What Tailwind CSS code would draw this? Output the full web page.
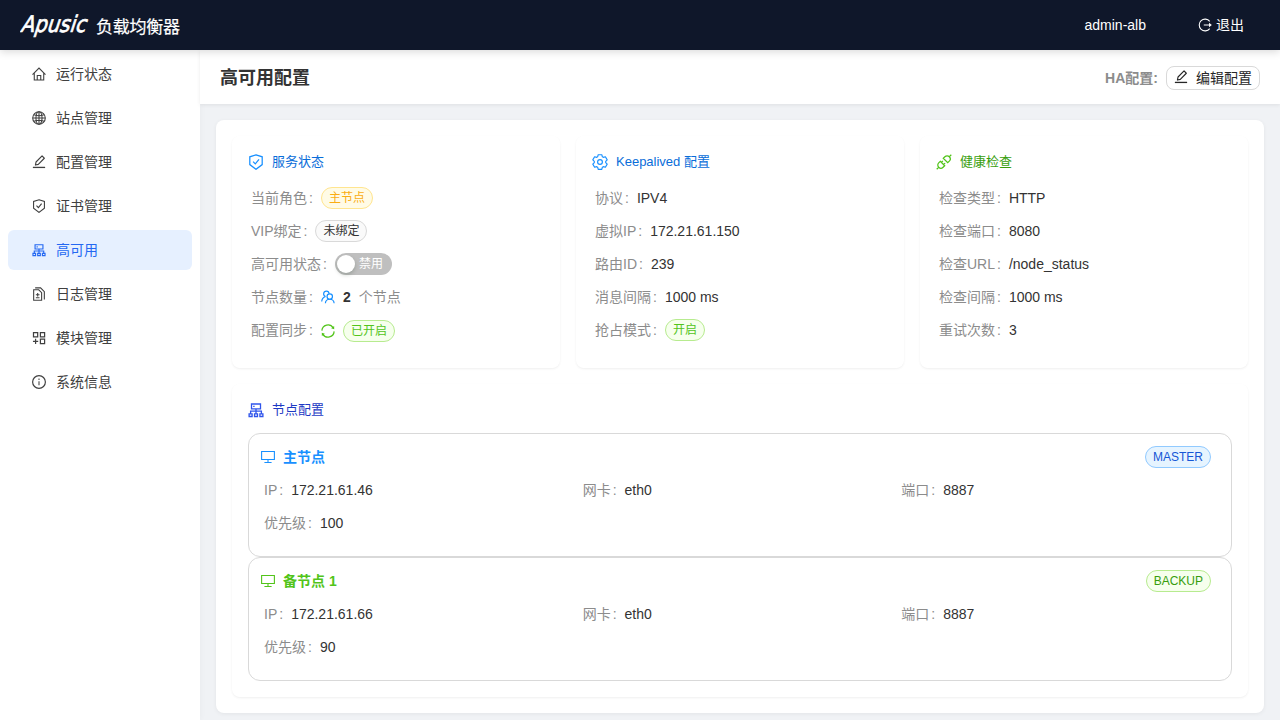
<!DOCTYPE html>
<html lang="zh-CN">
<head>
  <meta charset="UTF-8" />
  <title>高可用配置</title>
  <script src="https://cdn.jsdelivr.net/npm/@tailwindcss/browser@4"></script>
  <style>
    body {
      font-family: 'Liberation Sans', 'Noto Sans CJK SC', sans-serif;
    }
  </style>
</head>
<body class="w-[1280px] h-[720px] overflow-hidden bg-[#f0f2f5] text-sm text-[#404040]">
  <!-- icons -->
  <svg class="hidden">
    <symbol id="home" viewBox="0 0 16 16"><path d="M.6 8.6 8 1.2l7.4 7.4M2.6 7v7.8h10.8V7M6 14.6V9.8h4v4.8" fill="none" stroke="currentColor" stroke-width="1.25"/></symbol>
    <symbol id="globe" viewBox="0 0 16 16"><g fill="none" stroke="currentColor" stroke-width="1.25"><circle cx="8" cy="8" r="7.2"/><ellipse cx="8" cy="8" rx="3.5" ry="7.2"/><path d="M8 1v14M1 8h14M2.4 4.3c3 1.2 8.2 1.2 11.2 0M2.4 11.7c3-1.2 8.2-1.2 11.2 0"/></g></symbol>
    <symbol id="edit" viewBox="0 0 16 16"><path d="M1 14.2h14" stroke="currentColor" stroke-width="1.5"/><path d="M3.9 11.5 4.6 8l6.9-6.9 2.6 2.6-6.9 7z" fill="none" stroke="currentColor" stroke-width="1.3" stroke-linejoin="round"/></symbol>
    <symbol id="shield" viewBox="0 0 16 16"><path d="M8 .8 14.2 2.8v7.8L8 15.3l-6.2-4.7V2.8zM5.1 7.6l2.2 2.3 3.7-4.6" fill="none" stroke="currentColor" stroke-width="1.25"/></symbol>
    <symbol id="cluster" viewBox="0 0 16 16"><g fill="none" stroke="currentColor" stroke-width="1.3"><path d="M3.5 2h9v4.8h-9zM8 6.8v5M2.6 11.6V9.2h10.8v2.4M1.1 11.8h3v2.7h-3zM6.5 11.8h3v2.7h-3zM11.9 11.8h3v2.7h-3z"/><path d="M5.2 4.4h1.4"/></g></symbol>
    <symbol id="logs" viewBox="0 0 16 16"><g fill="none" stroke="currentColor" stroke-width="1.25"><path d="M1.9 3.2h5.8l3.3 3.3v8.7H1.9zM3.6 1h6.2l4.3 4.3v8.9M4.4 12.2h4.2M4.4 8.8h4.2M6.5 6.8v4"/></g></symbol>
    <symbol id="modules" viewBox="0 0 16 16"><path d="M1.7 1.9h4.8v4.7H1.7zM9.6 1.9h4.8v4.7H9.6zM9.6 9.3h4.8v5.1H9.6zM4.1 8.8v6.1M1.1 11.9h6" fill="none" stroke="currentColor" stroke-width="1.4"/></symbol>
    <symbol id="info" viewBox="0 0 16 16"><circle cx="8" cy="8" r="7.3" fill="none" stroke="currentColor" stroke-width="1.35"/><path d="M8 7v4.8M8 4.1v1.5" stroke="currentColor" stroke-width="1.2"/></symbol>
    <symbol id="logout" viewBox="0 0 16 16"><path d="M13.4 3.9a6.7 6.7 0 1 0 0 8.2M6.6 8H14" fill="none" stroke="currentColor" stroke-width="1.25"/><path d="M12.6 5.5 15.8 8l-3.2 2.5z" fill="currentColor"/></symbol>
    <symbol id="gear" viewBox="0 0 16 16"><g fill="none" stroke="currentColor" stroke-width="1.15" stroke-linejoin="round"><path d="M6.2.7h3.6l.5 2 1.1.65 2-.6 1.8 3.1-1.5 1.6v1.1l1.5 1.6-1.8 3.1-2-.6-1.1.65-.5 2H6.2l-.5-2-1.1-.65-2 .6-1.8-3.1 1.5-1.6v-1.1L.8 5.85l1.8-3.1 2 .6 1.1-.65z"/><circle cx="8" cy="8" r="2.4"/></g></symbol>
    <symbol id="api" viewBox="0 0 16 16"><path d="m7.3 4.3 4.4 4.4 1.6-1.6a3.1 3.1 0 0 0-4.4-4.4zM13.1 2.9l2.2-2.2M4.3 7.3l4.4 4.4-1.6 1.6a3.1 3.1 0 0 1-4.4-4.4zM2.9 13.1.7 15.3M5.4 8.4l1.5-1.5M7.6 10.6l1.5-1.5" fill="none" stroke="currentColor" stroke-width="1.25"/></symbol>
    <symbol id="team" viewBox="0 0 16 16"><g fill="none" stroke="currentColor" stroke-width="1.35"><circle cx="10" cy="7.5" r="3.1"/><path d="M5 15.2c.2-2.8 2.1-4.6 5-4.6s4.8 1.8 5 4.6M9.2 4.2A3.1 3.1 0 1 0 5.2 7.4M.8 13.2c.2-3 1.8-5 4.4-5.8"/></g></symbol>
    <symbol id="sync" viewBox="0 0 16 16"><g fill="none" stroke="currentColor" stroke-width="1.4"><path d="M1 7.6A7 7 0 0 1 14 4.4M15 8.4A7 7 0 0 1 2 11.6"/></g><path d="m15 2.2.1 3.7-3.5-1zM1 13.8l-.1-3.7 3.5 1z" fill="currentColor"/></symbol>
    <symbol id="desktop" viewBox="0 0 16 16"><path d="M.7 1.8h14.6v9.1H.7zM8 10.9v3.3M3.9 14.3h8.2" fill="none" stroke="currentColor" stroke-width="1.25"/></symbol>
  </svg>

  <header class="relative z-10 h-[50px] bg-[#0f172a] text-white flex items-center pl-5 pr-9 shadow-[0_2px_8px_rgba(0,0,0,0.15)]">
    <svg class="w-40 h-[50px]" viewBox="0 0 160 50" fill="#fff">
      <text transform="translate(0 32) skewX(-18)" font-family="DejaVu Sans" font-size="23" stroke="#fff" stroke-width=".7" textLength="65" lengthAdjust="spacingAndGlyphs">Apusic</text>
      <text x="76" y="32.5" font-size="17" textLength="84" font-family="Noto Sans CJK SC" stroke="#fff" stroke-width=".2">负载均衡器</text>
    </svg>
    <div class="ml-auto">admin-alb</div>
    <div class="ml-[52px] flex items-center gap-1"><svg class="size-[14px]"><use href="#logout"/></svg>退出</div>
  </header>

  <div class="flex h-[670px]">
    <nav class="w-[200px] bg-white px-2 pt-1 flex flex-col gap-1 shadow-[1px_0_6px_rgba(0,0,0,0.03)]">
      <a class="flex h-10 items-center gap-[10px] rounded-md pl-6"><svg class="size-[14px]"><use href="#home"/></svg>运行状态</a>
      <a class="flex h-10 items-center gap-[10px] rounded-md pl-6"><svg class="size-[14px]"><use href="#globe"/></svg>站点管理</a>
      <a class="flex h-10 items-center gap-[10px] rounded-md pl-6"><svg class="size-[14px]"><use href="#edit"/></svg>配置管理</a>
      <a class="flex h-10 items-center gap-[10px] rounded-md pl-6"><svg class="size-[14px]"><use href="#shield"/></svg>证书管理</a>
      <a class="flex h-10 items-center gap-[10px] rounded-md pl-6 bg-[#e6f0ff] text-[#2468f2]"><svg class="size-[14px]"><use href="#cluster"/></svg>高可用</a>
      <a class="flex h-10 items-center gap-[10px] rounded-md pl-6"><svg class="size-[14px]"><use href="#logs"/></svg>日志管理</a>
      <a class="flex h-10 items-center gap-[10px] rounded-md pl-6"><svg class="size-[14px]"><use href="#modules"/></svg>模块管理</a>
      <a class="flex h-10 items-center gap-[10px] rounded-md pl-6"><svg class="size-[14px]"><use href="#info"/></svg>系统信息</a>
    </nav>

    <main class="flex-1">
      <div class="h-[54px] bg-white flex items-center justify-between px-5 shadow-[0_1px_4px_rgba(0,0,0,0.08)]">
        <h1 class="mt-0.5 text-lg leading-[26px] font-bold text-[#333]">高可用配置</h1>
        <div class="mt-0.5 flex items-center gap-2">
          <span class="font-bold text-[#8c8c8c]">HA配置:</span>
          <button class="flex h-6 w-[94px] items-center gap-2 rounded-lg border border-[#d9d9d9] bg-white pl-[7px] text-[#262626]"><svg class="size-[14px] mb-0.5"><use href="#edit"/></svg>编辑配置</button>
        </div>
      </div>

      <div class="mx-4 mt-4 h-[593px] rounded-lg bg-white p-4 shadow-[0_1px_4px_rgba(0,0,0,0.06)]">
        <div class="grid grid-cols-3 gap-4">
          <section class="h-[232px] rounded-lg px-4 pt-4 shadow-[0_1px_2px_rgba(0,0,0,0.05),0_1px_4px_rgba(0,0,0,0.02)]">
            <h2 class="flex h-5 items-center gap-2 text-[13px] text-[#096dd9]"><svg class="size-4 text-[#1890ff]"><use href="#shield"/></svg>服务状态</h2>
            <dl class="mt-[9px] pl-[3px] text-[#8c8c8c]">
              <div class="flex h-[33px] items-center"><dt>当前角色</dt><i class="ml-0.5 mr-2 not-italic">:</i><dd class="h-[22px] rounded-full border border-[#ffe58f] bg-[#fffbe6] px-[7px] text-xs leading-5 text-[#faad14]">主节点</dd></div>
              <div class="flex h-[33px] items-center"><dt>VIP绑定</dt><i class="ml-0.5 mr-2 not-italic">:</i><dd class="h-[22px] rounded-full border border-[#d9d9d9] bg-[#fafafa] px-[7px] text-xs leading-5 text-[#333]">未绑定</dd></div>
              <div class="flex h-[33px] items-center"><dt>高可用状态</dt><i class="ml-0.5 mr-2 not-italic">:</i><dd class="flex h-[22px] w-[57px] items-center gap-[4px] rounded-full bg-[#bfbfbf] pl-0.5 text-xs text-white"><b class="size-[18px] rounded-full bg-white shadow-[0_2px_4px_rgba(0,35,11,0.2)]"></b>禁用</dd></div>
              <div class="flex h-[33px] items-center"><dt>节点数量</dt><i class="ml-0.5 mr-2 not-italic">:</i><dd class="flex items-center gap-2"><svg class="size-[14px] text-[#1890ff]"><use href="#team"/></svg><b class="text-[#333]">2</b>个节点</dd></div>
              <div class="flex h-[33px] items-center"><dt>配置同步</dt><i class="ml-0.5 mr-2 not-italic">:</i><svg class="mt-0.5 mr-2 size-[14px] text-[#52c41a]"><use href="#sync"/></svg><dd class="mt-0.5 h-[22px] rounded-full border border-[#b7eb8f] bg-[#f6ffed] px-[7px] text-xs leading-5 text-[#52c41a]">已开启</dd></div>
            </dl>
          </section>

          <section class="h-[232px] rounded-lg px-4 pt-4 shadow-[0_1px_2px_rgba(0,0,0,0.05),0_1px_4px_rgba(0,0,0,0.02)]">
            <h2 class="flex h-5 items-center gap-2 text-[13px] text-[#096dd9]"><svg class="size-4 text-[#1890ff]"><use href="#gear"/></svg>Keepalived 配置</h2>
            <dl class="mt-[9px] pl-[3px] text-[#8c8c8c]">
              <div class="flex h-[33px] items-center"><dt>协议</dt><i class="ml-0.5 mr-2 not-italic">:</i><dd class="text-[#333]">IPV4</dd></div>
              <div class="flex h-[33px] items-center"><dt>虚拟IP</dt><i class="ml-0.5 mr-2 not-italic">:</i><dd class="text-[#333]">172.21.61.150</dd></div>
              <div class="flex h-[33px] items-center"><dt>路由ID</dt><i class="ml-0.5 mr-2 not-italic">:</i><dd class="text-[#333]">239</dd></div>
              <div class="flex h-[33px] items-center"><dt>消息间隔</dt><i class="ml-0.5 mr-2 not-italic">:</i><dd class="text-[#333]">1000 ms</dd></div>
              <div class="flex h-[33px] items-center"><dt>抢占模式</dt><i class="ml-0.5 mr-2 not-italic">:</i><dd class="h-[22px] rounded-full border border-[#b7eb8f] bg-[#f6ffed] px-[7px] text-xs leading-5 text-[#52c41a]">开启</dd></div>
            </dl>
          </section>

          <section class="h-[232px] rounded-lg px-4 pt-4 shadow-[0_1px_2px_rgba(0,0,0,0.05),0_1px_4px_rgba(0,0,0,0.02)]">
            <h2 class="flex h-5 items-center gap-2 text-[13px] text-[#389e0d]"><svg class="size-4 text-[#52c41a]"><use href="#api"/></svg>健康检查</h2>
            <dl class="mt-[9px] pl-[3px] text-[#8c8c8c]">
              <div class="flex h-[33px] items-center"><dt>检查类型</dt><i class="ml-0.5 mr-2 not-italic">:</i><dd class="text-[#333]">HTTP</dd></div>
              <div class="flex h-[33px] items-center"><dt>检查端口</dt><i class="ml-0.5 mr-2 not-italic">:</i><dd class="text-[#333]">8080</dd></div>
              <div class="flex h-[33px] items-center"><dt>检查URL</dt><i class="ml-0.5 mr-2 not-italic">:</i><dd class="text-[#333]">/node_status</dd></div>
              <div class="flex h-[33px] items-center"><dt>检查间隔</dt><i class="ml-0.5 mr-2 not-italic">:</i><dd class="text-[#333]">1000 ms</dd></div>
              <div class="flex h-[33px] items-center"><dt>重试次数</dt><i class="ml-0.5 mr-2 not-italic">:</i><dd class="text-[#333]">3</dd></div>
            </dl>
          </section>
        </div>

        <section class="mt-4 h-[313px] rounded-lg px-4 pt-4 shadow-[0_1px_2px_rgba(0,0,0,0.05),0_1px_4px_rgba(0,0,0,0.02)]">
          <h2 class="flex h-5 items-center gap-2 text-[13px] text-[#1d39c4]"><svg class="size-4 text-[#2f54eb]"><use href="#cluster"/></svg>节点配置</h2>
          <div class="mt-[13px] h-[124px] rounded-xl border border-[#d9d9d9] pt-3">
            <div class="flex h-[22px] items-center gap-2 pl-3 pr-5">
              <svg class="size-[14px] text-[#1890ff]"><use href="#desktop"/></svg>
              <b class="text-[#1890ff]">主节点</b>
              <span class="ml-auto h-[22px] rounded-full border border-[#91caff] bg-[#e6f4ff] px-[7px] text-xs leading-5 text-[#1557d6]">MASTER</span>
            </div>
            <dl class="mt-[5px] grid grid-cols-[318.67px_318.67px_1fr] pl-[15px] text-[#8c8c8c]">
              <div class="flex h-[33px] items-center"><dt>IP</dt><i class="ml-0.5 mr-2 not-italic">:</i><dd class="text-[#333]">172.21.61.46</dd></div>
              <div class="flex h-[33px] items-center"><dt>网卡</dt><i class="ml-0.5 mr-2 not-italic">:</i><dd class="text-[#333]">eth0</dd></div>
              <div class="flex h-[33px] items-center"><dt>端口</dt><i class="ml-0.5 mr-2 not-italic">:</i><dd class="text-[#333]">8887</dd></div>
              <div class="flex h-[33px] items-center"><dt>优先级</dt><i class="ml-0.5 mr-2 not-italic">:</i><dd class="text-[#333]">100</dd></div>
            </dl>
          </div>
          <div class="h-[124px] rounded-xl border border-[#d9d9d9] pt-3">
            <div class="flex h-[22px] items-center gap-2 pl-3 pr-5">
              <svg class="size-[14px] text-[#52c41a]"><use href="#desktop"/></svg>
              <b class="text-[#52c41a]">备节点 1</b>
              <span class="ml-auto h-[22px] rounded-full border border-[#b7eb8f] bg-[#f6ffed] px-[7px] text-xs leading-5 text-[#389e0d]">BACKUP</span>
            </div>
            <dl class="mt-[5px] grid grid-cols-[318.67px_318.67px_1fr] pl-[15px] text-[#8c8c8c]">
              <div class="flex h-[33px] items-center"><dt>IP</dt><i class="ml-0.5 mr-2 not-italic">:</i><dd class="text-[#333]">172.21.61.66</dd></div>
              <div class="flex h-[33px] items-center"><dt>网卡</dt><i class="ml-0.5 mr-2 not-italic">:</i><dd class="text-[#333]">eth0</dd></div>
              <div class="flex h-[33px] items-center"><dt>端口</dt><i class="ml-0.5 mr-2 not-italic">:</i><dd class="text-[#333]">8887</dd></div>
              <div class="flex h-[33px] items-center"><dt>优先级</dt><i class="ml-0.5 mr-2 not-italic">:</i><dd class="text-[#333]">90</dd></div>
            </dl>
          </div>
        </section>
      </div>
    </main>
  </div>
</body>
</html>
